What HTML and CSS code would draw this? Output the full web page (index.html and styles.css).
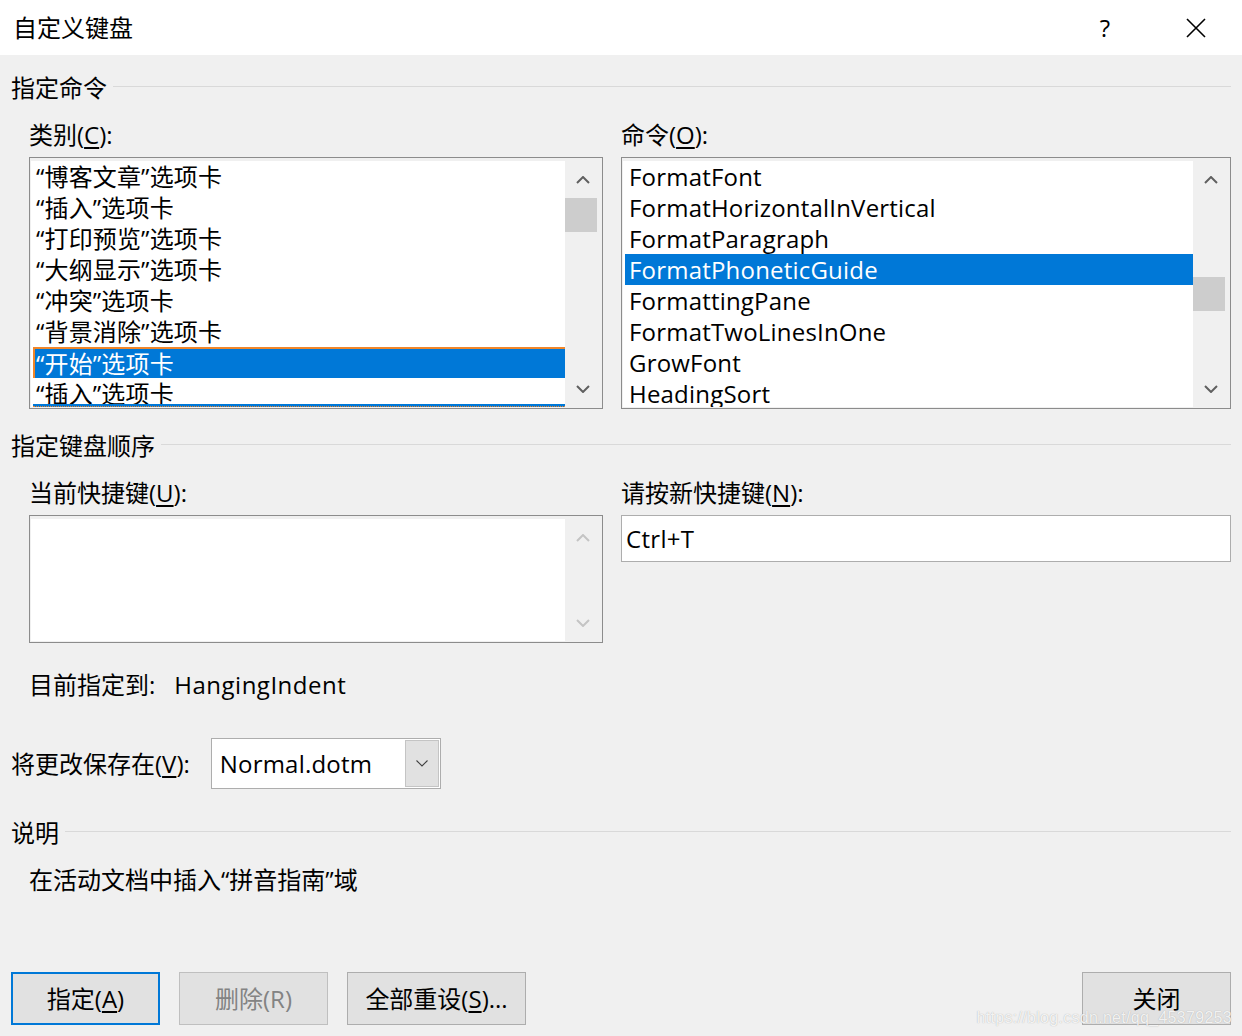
FILE: index.html
```html
<!DOCTYPE html>
<html lang="zh-CN">
<head>
<meta charset="utf-8">
<title>自定义键盘</title>
<link rel="stylesheet" href="styles.css">
</head>
<body>
<div class="dialog">
  <div class="titlebar">
    <span class="title">自定义键盘</span>
    <span class="help">?</span>
    <span class="close">
      <svg width="22" height="22" viewBox="0 0 22 22"><path d="M2 2 L20 20 M20 2 L2 20" stroke="#000" stroke-width="1.6" fill="none"/></svg>
    </span>
  </div>

  <div class="main">
    <div class="group-head"><span>指定命令</span><span class="rule"></span></div>

    <div class="pair">
      <div class="col">
        <div class="label">类别(<u>C</u>):</div>
        <div class="listbox">
          <div class="items">
            <div class="item">“博客文章”选项卡</div>
            <div class="item">“插入”选项卡</div>
            <div class="item">“打印预览”选项卡</div>
            <div class="item">“大纲显示”选项卡</div>
            <div class="item">“冲突”选项卡</div>
            <div class="item">“背景消除”选项卡</div>
            <div class="item sel focus">“开始”选项卡</div>
            <div class="item">“插入”选项卡</div>
            <div class="peek"></div>
          </div>
          <div class="scroll">
            <svg class="arrow" width="14" height="8" viewBox="0 0 14 8"><polyline points="1,7 7,1 13,7" fill="none" stroke="#606060" stroke-width="2"/></svg>
            <div class="track"><div class="thumb thumb-left"></div></div>
            <svg class="arrow" width="14" height="8" viewBox="0 0 14 8"><polyline points="1,1 7,7 13,1" fill="none" stroke="#606060" stroke-width="2"/></svg>
          </div>
        </div>
      </div>
      <div class="col">
        <div class="label">命令(<u>O</u>):</div>
        <div class="listbox">
          <div class="items latin">
            <div class="item">FormatFont</div>
            <div class="item">FormatHorizontalInVertical</div>
            <div class="item">FormatParagraph</div>
            <div class="item sel">FormatPhoneticGuide</div>
            <div class="item">FormattingPane</div>
            <div class="item">FormatTwoLinesInOne</div>
            <div class="item">GrowFont</div>
            <div class="item">HeadingSort</div>
          </div>
          <div class="scroll">
            <svg class="arrow" width="14" height="8" viewBox="0 0 14 8"><polyline points="1,7 7,1 13,7" fill="none" stroke="#606060" stroke-width="2"/></svg>
            <div class="track"><div class="thumb thumb-right"></div></div>
            <svg class="arrow" width="14" height="8" viewBox="0 0 14 8"><polyline points="1,1 7,7 13,1" fill="none" stroke="#606060" stroke-width="2"/></svg>
          </div>
        </div>
      </div>
    </div>

    <div class="group-head gh2"><span>指定键盘顺序</span><span class="rule"></span></div>

    <div class="pair pair2">
      <div class="col">
        <div class="label">当前快捷键(<u>U</u>):</div>
        <div class="listbox shortbox">
          <div class="items"></div>
          <div class="scroll scroll-dis">
            <svg class="arrow" width="14" height="8" viewBox="0 0 14 8"><polyline points="1,7 7,1 13,7" fill="none" stroke="#c4c4c4" stroke-width="2"/></svg>
            <div class="track"></div>
            <svg class="arrow" width="14" height="8" viewBox="0 0 14 8"><polyline points="1,1 7,7 13,1" fill="none" stroke="#c4c4c4" stroke-width="2"/></svg>
          </div>
        </div>
      </div>
      <div class="col">
        <div class="label">请按新快捷键(<u>N</u>):</div>
        <div class="textbox">Ctrl+T</div>
      </div>
    </div>

    <div class="assigned">
      <span>目前指定到:</span>
      <span class="cmd-name">HangingIndent</span>
    </div>

    <div class="save-row">
      <span>将更改保存在(<u>V</u>):</span>
      <div class="combo">
        <span class="combo-text">Normal.dotm</span>
        <span class="combo-btn">
          <svg width="12" height="7" viewBox="0 0 12 7"><polyline points="0.5,0.5 6,6 11.5,0.5" fill="none" stroke="#404040" stroke-width="1.1"/></svg>
        </span>
      </div>
    </div>

    <div class="group-head gh3"><span>说明</span><span class="rule"></span></div>
    <div class="desc">在活动文档中插入“拼音指南”域</div>

    <div class="buttons">
      <div class="btn btn-default">指定(<u>A</u>)</div>
      <div class="btn btn-disabled">删除(R)</div>
      <div class="btn btn-wide">全部重设(<u>S</u>)...</div>
      <div class="btn btn-close">关闭</div>
    </div>
  </div>
  <div class="watermark">https://blog.csdn.net/qq_45379253</div>
</div>
</body>
</html>
```

FILE: styles.css
```css
* { box-sizing: border-box; }
html, body { margin: 0; padding: 0; }
body {
  background: #f0f0f0;
  font-family: "Open Sans", "Noto Sans CJK SC", sans-serif;
  font-size: 24px;
  color: #000;
  width: 1242px;
  height: 1036px;
  overflow: hidden;
}
u { text-decoration-thickness: 2px; text-underline-offset: 3px; }
.dialog { position: relative; width: 1242px; height: 1036px; }

.titlebar {
  height: 55px;
  background: #fff;
  display: flex;
  align-items: center;
  padding-left: 13px;
}
.title { line-height: 32px; flex: 1; }
.help { width: 24px; text-align: center; margin-right: 68px; line-height: 32px; }
.close { width: 22px; height: 22px; margin-right: 35px; display: flex; }

.main { padding: 0 11px; }

.group-head {
  display: flex;
  align-items: center;
  margin-top: 17px;
  height: 32px;
  line-height: 32px;
}
.group-head .rule {
  flex: 1;
  height: 1px;
  background: #d9d9d9;
  margin-left: 6px;
  margin-bottom: 4px;
}
.gh2 { margin-top: 21px; }
.gh3 { margin-top: 28px; }

.pair {
  display: grid;
  grid-template-columns: 574px 1fr;
  column-gap: 18px;
  padding-left: 18px;
}
.label { margin-top: 15px; line-height: 32px; height: 32px; margin-bottom: 6px; }

.listbox {
  height: 252px;
  border: 1px solid #8c8c8c;
  background: #f0f0f0;
  padding: 3px 1px 1px 1px;
  display: flex;
}
.items {
  flex: 1;
  background: #fff;
  overflow: hidden;
  position: relative;
  padding: 0 0 0 2px;
}
.item {
  height: 31px;
  line-height: 31px;
  padding-left: 3px;
  white-space: nowrap;
  letter-spacing: 0.15px;
}
.latin .item { padding-left: 4px; letter-spacing: 0.2px; }
.item.sel { background: #0078d7; color: #fff; }
.item.focus {
  border-top: 2px solid #f0862a;
  border-left: 2px solid #f0862a;
  padding-left: 1px;
  line-height: 29px;
}
.peek {
  position: absolute;
  left: 2px; right: 0; bottom: 0;
  height: 3px;
  background: #0078d7;
  border-bottom: 1px dotted #f0862a;
}
.scroll {
  width: 36px;
  display: flex;
  flex-direction: column;
  align-items: center;
}
.scroll .arrow { margin: 15px 0 10px; flex: none; }
.scroll .arrow:last-child { margin: 10px 0 14px; }
.track { flex: 1; width: 100%; position: relative; }
.thumb { position: absolute; left: 0; width: 32px; height: 34px; background: #cdcdcd; }
.thumb-left { top: 4px; }
.thumb-right { top: 83px; }

.shortbox { height: 128px; }
.scroll-dis { width: 36px; }
.scroll-dis .arrow { margin: 15px 0 0; }
.scroll-dis .arrow:last-child { margin: 0 0 14px; }

.textbox {
  height: 47px;
  border: 1px solid #adadad;
  background: #fff;
  line-height: 45px;
  padding-left: 4px;
  letter-spacing: 0.3px;
}

.assigned {
  display: flex;
  gap: 19px;
  margin-top: 26px;
  padding-left: 18px;
  line-height: 32px;
}
.cmd-name { letter-spacing: 0.5px; }

.save-row {
  display: flex;
  align-items: center;
  margin-top: 37px;
  gap: 21px;
  line-height: 32px;
}
.combo {
  width: 230px;
  height: 51px;
  border: 1px solid #adadad;
  background: #fff;
  display: flex;
  align-items: stretch;
  padding: 1px;
}
.combo-text { flex: 1; line-height: 47px; padding-left: 7px; letter-spacing: 0.2px; }
.combo-btn {
  width: 34px;
  background: #e1e1e1;
  border: 1px solid #c4c4c4;
  display: flex;
  align-items: center;
  justify-content: center;
}

.desc { margin-top: 15px; padding-left: 18px; line-height: 32px; }

.buttons {
  display: flex;
  gap: 19px;
  margin-top: 76px;
}
.btn {
  height: 53px;
  width: 149px;
  background: #e1e1e1;
  border: 1px solid #adadad;
  display: flex;
  align-items: center;
  justify-content: center;
  line-height: 32px;
}
.btn-default { border: 2px solid #0078d7; }
.btn-disabled { color: #838383; border-color: #bfbfbf; }
.btn-wide { width: 179px; }
.btn-close { margin-left: auto; }

.watermark {
  position: absolute;
  right: 10px;
  bottom: 9px;
  font-family: "Liberation Sans", Arial, sans-serif;
  font-size: 16px;
  color: rgba(255,255,255,0.85);
  text-shadow: 0 0 1px rgba(120,120,120,0.6);
  letter-spacing: 0.3px;
}
```
